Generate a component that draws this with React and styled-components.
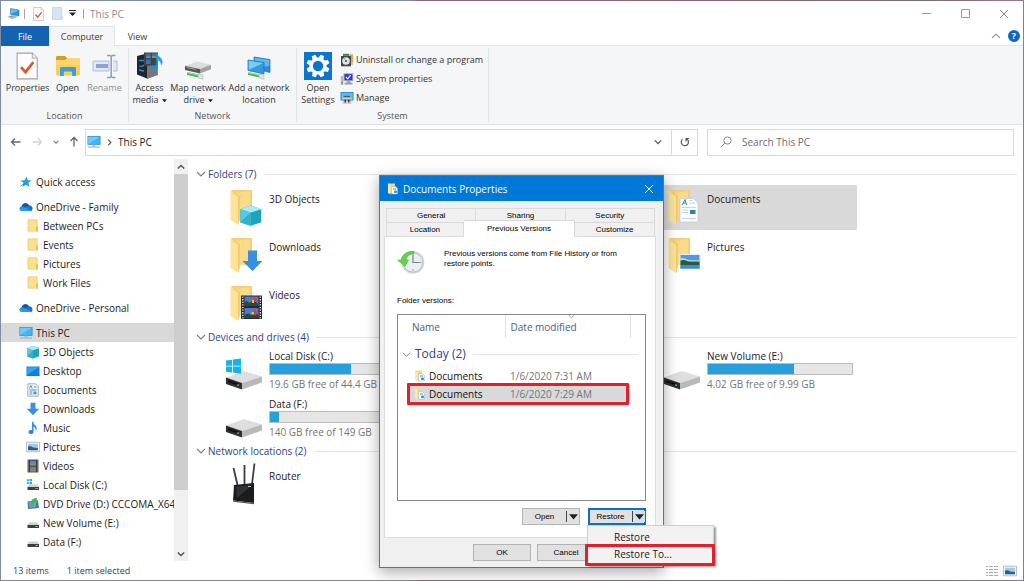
import React from 'react';
import styled, {createGlobalStyle, css} from 'styled-components';

const GlobalStyle = createGlobalStyle`
  * { box-sizing: border-box; }
  body {
    margin: 0;
    font-family: 'Open Sans', 'Noto Sans', sans-serif;
    font-size: 10px;
    line-height: 12px;
    color: #1b1b1b;
    overflow: hidden;
  }
  button, input {
    font: inherit;
    color: inherit;
    margin: 0;
    padding: 0;
    border: 0;
    border-radius: 0;
    background: none;
  }
  a { color: inherit; text-decoration: none; }
  h1, h2, p, ul { margin: 0; padding: 0; font: inherit; list-style: none; }
  svg { display: block; flex: none; }
`;

/* ---------- icons ---------- */

const PcIcon = ({size = 14}) => (
  <svg width={size} height={size} viewBox="0 0 14 14">
    <rect x="0.5" y="1" width="13" height="8.8" fill="#2f86c4" />
    <path d="M1.2 1.7h11.6v7.4H1.2z" fill="#41b4f4" />
    <path d="M1.2 9.1L12.8 1.7H1.2z" fill="#6fcbfa" />
    <path d="M5.5 9.8h3v1.4h-3z" fill="#a9bcc9" />
    <path d="M1 11.4h12v1.3H1z" fill="#a4b6c4" />
  </svg>
);

const TitlePcIcon = () => (
  <svg width="14" height="14" viewBox="0 0 14 14">
    <path d="M3.500 1.500l8.500 1.600v6L3.500 7.400z" fill="#2b95dd" stroke="#1a6fb0" strokeWidth="0.5" />
    <path d="M3.900 2l7.600 1.400L3.900 7z" fill="#67bff2" />
    <path d="M.5 9.500l6-1.500 4.400 2-6 2.200z" fill="#a7b8c4" />
    <path d="M2.400 9.800l3.800-.9" stroke="#6e8596" strokeWidth="0.7" />
  </svg>
);

const CheckPage = ({size = 14}) => (
  <svg width={size * 0.8} height={size} viewBox="0 0 20 25">
    <path d="M1 1h13.500L19 5.500V24H1z" fill="#fdfdfd" stroke="#a3a3a3" strokeWidth="1" />
    <path d="M14.500 1v4.500H19" fill="#eee" stroke="#a3a3a3" strokeWidth="0.8" />
    <path d="M4.500 13.500l4 4.500 7-9" fill="none" stroke="#da5a25" strokeWidth="2.4" />
  </svg>
);

const PageIcon = () => (
  <svg width="11" height="13" viewBox="0 0 11 13">
    <path d="M.5.5h9.300v12H.5z" fill="#d5e3f4" stroke="#c3d5ea" strokeWidth="0.8" />
    <path d="M9 8.500h1.500v4H9z" fill="#bed2ea" />
  </svg>
);

const OpenFolderIcon = () => (
  <svg width="26" height="28" viewBox="0 0 26 28">
    <path d="M1 5.500Q1 4 2.500 4H10l2 2h11.500Q25 6 25 7.500V22q0 1.500-1.500 1.500h-21Q1 23.500 1 22z" fill="#f9cf5b" />
    <path d="M1 5.500Q1 4 2.500 4H10l2 2-1.500 2H1z" fill="#dc9b1d" />
    <path d="M1 8h9.500l2-2H23.500Q25 6 25 7.500V13H1z" fill="#fcd670" />
    <path d="M5 24v-7.500q0-1.500 1.500-1.500h13q1.500 0 1.500 1.500V24h-3.800v-3.500q0-1-1-1h-6.400q-1 0-1 1V24z" fill="#3f9bdc" />
  </svg>
);

const RenameIcon = () => (
  <svg width="26" height="28" viewBox="0 0 26 28">
    <path d="M1 9h16v10H1zM21 9h4v10h-4" fill="#dfe8f6" stroke="#b0bfd8" strokeWidth="1" />
    <path d="M4 12h12v4H4z" fill="#8da3cb" />
    <path d="M15 3.500h3l1.200 1 1.200-1H23.500M15 25.500h3l1.200-1 1.200 1H23.500M19.200 4.500v20" fill="none" stroke="#8b9dbd" strokeWidth="1.500" />
  </svg>
);

const MediaIcon = () => (
  <svg width="28" height="28" viewBox="0 0 28 28">
    <path d="M8 2l13-1 1 22-11 4z" fill="#77777a" />
    <path d="M1 4l10-2.500v25L1 22.500z" fill="#20262c" />
    <path d="M8 0.500h14v13H8z" fill="#414448" />
    <path d="M10 1.500h4.500v4.500H10zM16 1.500h4.500v4.500H16zM10 7.500h4.500v4.500H10z" fill="#3f70c2" />
    <path d="M10 4.500h4.500V6H10zM16 4h4.500v2H16z" fill="#7d9a45" />
    <path d="M3 8.500h5M3 14q3 1 5-1M3 18l5 1" stroke="#1d93d6" strokeWidth="1.300" fill="none" />
    <path d="M21 1.500v14" stroke="#1c8fe4" strokeWidth="1.800" />
    <path d="M21 1c1 4 6 4.500 5.500 9.500-.2 1.500-1 2.500-1.800 3 .8-4-1.700-5-3.700-5.500z" fill="#2d9cec" />
    <ellipse cx="18.800" cy="16" rx="3.200" ry="2.500" fill="#1c8fe4" transform="rotate(-20 18.800 16)" />
  </svg>
);

const NetPipe = ({y = 0}) => (
  <g transform={`translate(0 ${y})`}>
    <path d="M3 0l14 3v3L3 3z" fill="#48b552" />
    <path d="M3 0l14 3v1L3 1.200z" fill="#9fe29c" />
    <path d="M14 2l5 .9v4.300l-5-1.300z" fill="#dfe6e2" stroke="#9fb0a7" strokeWidth="0.500" />
  </g>
);

const NetDriveIcon = () => (
  <svg width="28" height="28" viewBox="0 0 28 28">
    <path d="M1 14L13 9.500l14 3.200L16 17z" fill="#dcdcdc" />
    <path d="M1 14l15 3v4.500L1 18z" fill="#55595c" />
    <path d="M16 17l11-4.300v4.500L16 21.500z" fill="#a2a2a2" />
    <path d="M3 15.600l9 1.800" stroke="#9aa0a4" strokeWidth="1" />
    <NetPipe y={20} />
  </svg>
);

const NetLocationIcon = () => (
  <svg width="28" height="28" viewBox="0 0 28 28">
    <path d="M9 5l16 2.500v13L9 16.500z" fill="#2c8ed4" stroke="#1d6ba7" strokeWidth="0.700" />
    <path d="M9.700 5.800l14.600 2.300v6L9.700 15.700z" fill="#5db9ee" />
    <path d="M3 8l16 2.500v11.500L3 18.500z" fill="#3499df" stroke="#1d6ba7" strokeWidth="0.700" />
    <path d="M3.700 8.800l14.600 2.300L3.700 17.800z" fill="#7accf5" />
    <NetPipe y={20} />
  </svg>
);

const SettingsIcon = () => (
  <svg width="28" height="28" viewBox="0 0 28 28">
    <path d="M0 0h28v28H0z" fill="#0b74d1" />
    <g transform="translate(14 14)" fill="#fff">
      {[0, 45, 90, 135, 180, 225, 270, 315].map(a => (
        <path key={a} d="M-2.600-7.500L-1.900-11.500H1.900L2.600-7.500z" transform={`rotate(${a + 22})`} />
      ))}
      <circle r="8.600" />
      <circle r="5.200" fill="#0b74d1" />
    </g>
  </svg>
);

const UninstallIcon = () => (
  <svg width="14" height="14" viewBox="0 0 14 14">
    <path d="M3 1h10v11H3z" fill="#c9c3b3" />
    <path d="M3 .8h6v2H3z" fill="#4e7f42" />
    <path d="M10 2h3v7h-3z" fill="#e0a54e" />
    <path d="M1 3h10v10.300H1z" fill="#43464a" />
    <circle cx="6" cy="8" r="3.800" fill="#e4e6e6" />
    <path d="M6 8L3 5.500 5 4.300z" fill="#9dc5a6" />
    <circle cx="6" cy="8" r="1.100" fill="#565a5e" />
  </svg>
);

const SysPropsIcon = () => (
  <svg width="14" height="14" viewBox="0 0 14 14">
    <path d="M.8 4h2.500v9H.8z" fill="#b8b6ae" />
    <path d="M3.500 1.200h9.800v8H3.500z" fill="#a9aaca" />
    <path d="M4.500 2.200h7.800v6H4.500z" fill="#2d37c4" />
    <path d="M6 5l1.800 1.800L10.500 3.200" stroke="#fff" strokeWidth="1.200" fill="none" />
    <path d="M6.500 9.200h4v1.600h2v1.700h-8v-1.700h2z" fill="#9b9bb0" />
    <path d="M1.300 10h1.500v1.500H1.300z" fill="#5e9c52" />
  </svg>
);

const ManageIcon = () => (
  <svg width="14" height="14" viewBox="0 0 14 14">
    <path d="M.5 1h13v8.500H.5z" fill="#2686c6" />
    <path d="M1.300 1.800h11.400v6.800H1.300z" fill="#5abcf0" />
    <path d="M3.800 4.800h6.400v1.800H3.800z" fill="#4c5d69" />
    <path d="M2.500 6.500h9V13h-9z" fill="#cfd4d8" />
    <path d="M2.500 8.500h9v1.200h-9z" fill="#70818d" />
    <path d="M4.500 8.500H6v3H4.500zM8 8.500h1.500v3H8z" fill="#33424d" />
  </svg>
);

const StarIcon = () => (
  <svg width="12" height="12" viewBox="0 0 12 12">
    <path d="M6.500.5l1.300 3.700 4 .2-3.300 2.400 1 4.200L6 8.700 2.500 11l1.100-4L.3 4.600l4.200-.3z" fill="#2e9ae0" />
    <path d="M.5 10l4-2.500" stroke="#2276b5" strokeWidth="0.800" />
  </svg>
);

const CloudIcon = () => (
  <svg width="14" height="10" viewBox="0 0 14 10">
    <path d="M3 9Q.5 9 .5 6.600.5 4.500 2.700 4.200 3.600 1.200 6.600 1.200q2.200 0 3.300 2 3.600.3 3.600 3.200Q13.500 9 11 9z" fill="#1273c9" />
    <path d="M3 9Q.5 9 .5 6.600.5 4.500 3 4.200q1.200 0 2.200.8L12.600 8.400Q12 9 11 9z" fill="#2a9ae8" />
    <path d="M2.700 4.200Q3.600 1.200 6.600 1.200q2.200 0 3.300 2L5.500 5.200Q4.200 4 2.700 4.200z" fill="#0f56a8" />
  </svg>
);

const SmallFolderIcon = () => (
  <svg width="12" height="14" viewBox="0 0 12 14">
    <path d="M1 .8h9.200v11.400H1z" fill="#fae08c" stroke="#e3c263" strokeWidth="0.600" />
    <path d="M9 7.500h2v5.300L9.200 12z" fill="#e9bf54" />
  </svg>
);

const CubeShape = () => (
  <g>
    <path d="M7 .8l6 2.500v8L7 13.500l-6-2.200v-8z" fill="#1fa3bd" />
    <path d="M7 .8l6 2.500L7 5.300 1 3.300z" fill="#a9ecf5" />
    <path d="M1 3.300l6 2v8.200l-6-2.200z" fill="#55cbdd" />
    <path d="M1 11.300l6-6v8.200z" fill="#35b0c8" />
  </g>
);

const CubeIcon = () => <svg width="14" height="14" viewBox="0 0 14 14"><CubeShape /></svg>;

const DesktopIcon = () => (
  <svg width="14" height="12" viewBox="0 0 14 12">
    <path d="M.5 1.500h13v9H.5z" fill="#1482d6" />
    <path d="M1.200 2.200h11.600L1.200 9.500z" fill="#2fa9f5" />
    <path d="M.5 10.200h13v.9H.5z" fill="#175f9c" />
  </svg>
);

const DocIcon = () => (
  <svg width="12" height="14" viewBox="0 0 12 14">
    <path d="M.8.8h7.700L11.200 3.500v9.700H.8z" fill="#f4f8fb" stroke="#8b9aa5" strokeWidth="0.800" />
    <path d="M2.500 5.500L4 2.500l1.200 3M7 4h2.500M2.500 7h7M2.500 9h3M2.500 11h3" stroke="#3b87bd" strokeWidth="0.900" fill="none" />
    <path d="M6.500 8.500h3v2.800h-3z" fill="#4598cc" />
  </svg>
);

const DownIcon = () => (
  <svg width="14" height="14" viewBox="0 0 14 14">
    <path d="M4.500.8h5v6h3.800L7 13.200.7 6.800h3.800z" fill="#3a8fde" />
  </svg>
);

const MusicIcon = () => (
  <svg width="12" height="14" viewBox="0 0 12 14">
    <path d="M5.800.8v9.500" stroke="#1e87dc" strokeWidth="1.400" />
    <path d="M5.200.5C6 3.500 10 4 9.800 7.800c-.1 1-.5 1.700-1 2.200C9 7 7.500 6 5.800 5.500z" fill="#2b95e8" />
    <ellipse cx="4" cy="11" rx="2.600" ry="2" fill="#1e87dc" />
  </svg>
);

const PicIcon = () => (
  <svg width="14" height="12" viewBox="0 0 14 12">
    <path d="M.5 1.200h13v9.600H.5z" fill="#f7f9fa" stroke="#98a6b0" strokeWidth="0.700" />
    <path d="M2 2.700h10v6.600H2z" fill="#9cc9ee" />
    <path d="M2 5.500q3-1 5 1 3 .2 5 .8v2H2z" fill="#325f78" />
  </svg>
);

const FilmIcon = () => (
  <svg width="12" height="14" viewBox="0 0 12 14">
    <path d="M.6.6h10.800v12.800H.6z" fill="#2b2d31" />
    <path d="M3 1.500h6v5H3zM3 7.500h6v5H3z" fill="#5d7fc4" />
    <path d="M3 4.500h6v2H3zM3 10.500h6v2H3z" fill="#a98b3c" />
    <path d="M1.700 1.500v11.500M10.300 1.500v11.500" stroke="#dedede" strokeWidth="0.900" strokeDasharray="1 1" />
  </svg>
);

const SmallDriveIcon = ({windows}) => (
  <svg width="14" height="14" viewBox="0 0 14 14">
    {windows && <path d="M.8 1.300h2v2h-2zM3.500 1h2.500v2.300H3.500zM.8 4h2v2h-2zM3.500 4h2.500v2.300H3.500z" fill="#1fb4ec" />}
    <path d="M3 6.500h8.500l1.500 2.500H1.500z" fill="#cfcfcf" />
    <path d="M1.500 9h11.500v3H1.500z" fill="#3c3f42" />
    <path d="M9.500 10h2.200v.9H9.500z" fill="#9fd39b" />
  </svg>
);

const DvdIcon = () => (
  <svg width="14" height="14" viewBox="0 0 14 14">
    <path d="M1.500 4.500l10.500-1 1 7.500-11 1z" fill="#4e7896" />
    <path d="M2.500 5.500l8-1-1 6h-6z" fill="#69a2c3" />
    <path d="M10.500.5L5 3l2 1.200-3 5 6-4 1.500 1z" fill="#43b854" />
  </svg>
);

const TileFolder = ({children}) => (
  <svg width="40" height="40" viewBox="0 0 40 40">
    <path d="M8 2h20v25H8z" fill="#f3d073" />
    <path d="M12 5l14-2v26H12z" fill="#f8dc8b" />
    <path d="M6.500 2l9.300 5.500v23.500l-1.800 6L6.500 32z" fill="#fce399" />
    <path d="M6.500 2l9.300 5.500v23.500L14 37V9z" fill="#f1cb69" />
    {children}
  </svg>
);

const FolderCube = () => (
  <TileFolder>
    <g transform="translate(14.500 16) scale(1.750 1.620)"><CubeShape /></g>
  </TileFolder>
);

const FolderDown = () => (
  <TileFolder><path d="M24 14.500h9V25h5.500L28.500 35 18.500 25H24z" fill="#3790df" /></TileFolder>
);

const FolderFilm = () => (
  <TileFolder>
    <path d="M17 11.500h21V35H17z" fill="#26282c" />
    <path d="M20.500 12.500h14V22h-14zM20.500 24h14v10h-14z" fill="#5178cb" />
    <path d="M20.500 18q3-2 5 1l4-3 5 4v2h-14zM20.500 31q4-3 6 0l4-2 4 2v3h-14z" fill="#294b3c" />
    <path d="M30 14h2.500v4H30zM30 26h2.500v5H30z" fill="#d63e2c" />
    <path d="M28 16h2v3h-2zM27.500 28h2.500v2.500h-2.500z" fill="#edc02b" />
    <path d="M18.800 12.500V35M36.300 12.500V35" stroke="#e8e8e8" strokeWidth="1.400" strokeDasharray="1.300 1.300" />
  </TileFolder>
);

const FolderDoc = () => (
  <TileFolder>
    <path d="M18 10.500h13.500L36 15v19H18z" fill="#fbfdfe" stroke="#b9c5cd" strokeWidth="0.600" />
    <path d="M20 17l3-5.500 1.500 5.500M21 15h3" stroke="#2a86c9" strokeWidth="1" fill="none" />
    <path d="M27 12.500h3.500M27 15h6M20 19.500h14M20 22h6M20 24.500h6M20 30.500h14" stroke="#b8cddc" strokeWidth="0.800" />
    <path d="M28 22h5.500v4H28z" fill="#357fae" />
  </TileFolder>
);

const FolderPic = () => (
  <TileFolder>
    <path d="M17.500 18h21v15.500h-21z" fill="#eaf1f6" />
    <path d="M18.500 19h19v13.500h-19z" fill="#4f9be0" />
    <path d="M18.500 22q5 0 8 2 6 .5 11 0v5h-19z" fill="#b9dcf3" />
    <path d="M18.500 24.500q4-1.500 7 .8 6 .5 12 .2v3.500h-19z" fill="#2d5a46" />
    <path d="M18.500 29h19v3.500h-19z" fill="#3a8fc4" />
  </TileFolder>
);

const DriveIcon = ({windows}) => (
  <svg width="40" height="40" viewBox="0 -4 40 40">
    <path d="M2 22.500L20 16l18 5.500-20 6.500z" fill="#dededf" />
    <path d="M2 22.500L18 28v6.500L2 29z" fill="#2d2f31" />
    <path d="M18 28l20-6.500v6L18 34.500z" fill="#b9b9bb" />
    <path d="M4 25l11 3.800v2L4 27.200z" fill="#111" />
    <path d="M13 29.800l2 .6" stroke="#6fd08c" strokeWidth="1.200" />
    {windows && <path d="M2 5.500l6-.8v6H2zM8.800 4.600L17 3.500v7.200H8.800zM2 11.500h6v6l-6-.8zM8.800 11.500H17v7.300l-8.200-1.200z" fill="#12b4ef" />}
  </svg>
);

const RouterIcon = () => (
  <svg width="40" height="44" viewBox="0 0 40 44">
    <path d="M9.500 5l4 17M20.500 2v19M30.500 .5L28 21" stroke="#3b3d40" strokeWidth="1.800" />
    <path d="M10 22l20-2v20L9 37.500z" fill="#1b1c1e" />
    <path d="M12 23.500l16.500-1.500L13 35z" fill="#303235" />
    <path d="M9 37.500L30 40v1.200L9 38.800z" fill="#555" />
    <path d="M24 23.500h3" stroke="#ddd" strokeWidth="0.800" />
  </svg>
);

const HistoryIcon = () => (
  <svg width="28" height="28" viewBox="0 0 28 28">
    <circle cx="16" cy="13.500" r="11.300" fill="#cfd6dc" />
    <circle cx="16" cy="13.500" r="9.600" fill="#e9eff4" stroke="#b3bcc4" strokeWidth="0.800" />
    <path d="M16 5v2M16 20v2M22.500 13.500h2M8 13.500h2" stroke="#8c97a0" strokeWidth="0.900" />
    <path d="M16 6.500v7h6.500" stroke="#76828c" strokeWidth="1.200" fill="none" />
    <path d="M17 2.200Q6 2 4 11H.5L8 17.500l3.500-6.500H9Q10 5 17 4.700z" fill="#5fd248" stroke="#43ac35" strokeWidth="0.500" />
  </svg>
);

const TinyDocFolder = () => (
  <svg width="12" height="12" viewBox="0 0 12 12">
    <path d="M1 .5h7V10H1z" fill="#f6d67c" />
    <path d="M1 .5l2.500 1.500v9.500L1 10z" fill="#fdeaae" />
    <path d="M4.500 3.500h4l2 2V11h-6z" fill="#f5fafd" stroke="#9db7c9" strokeWidth="0.500" />
    <path d="M6 6h3M7.500 8h2v1.500h-2z" stroke="#3a8cc6" strokeWidth="0.900" fill="#3a8cc6" />
  </svg>
);

const Chevron = ({dir = 'down', size = 10, color = '#7d7d7d', weight = 1.100}) => {
  const turn = {down: 0, left: 90, up: 180, right: 270}[dir];
  return (
    <svg width={size} height={size} viewBox="0 0 10 10">
      <path d="M1 3l4 4 4-4" transform={`rotate(${turn} 5 5)`} fill="none" stroke={color} strokeWidth={weight} />
    </svg>
  );
};

const Arrow = ({dir, color = '#666'}) => (
  <svg width="12" height="12" viewBox="0 0 12 12">
    <path
      d="M10.500 6H1.500M5 2.500L1.500 6 5 9.500"
      transform={`rotate(${{left: 0, up: 90, right: 180}[dir]} 6 6)`}
      fill="none" stroke={color} strokeWidth="1.300"
    />
  </svg>
);

const Triangle = ({size = 5}) => (
  <svg width={size} height={size} viewBox="0 0 6 6"><path d="M0 1.500h6L3 5z" fill="#222" /></svg>
);

const CloseIcon = ({color = '#888', size = 10}) => (
  <svg width={size} height={size} viewBox="0 0 10 10">
    <path d="M1 1l8 8M9 1L1 9" stroke={color} strokeWidth="1" />
  </svg>
);

/* ---------- window ---------- */

const Desktop = styled.div`
  position: relative;
  height: 100vh;
  padding: 1px;
  background: linear-gradient(90deg, #7d8ba3 0 40%, #8d6672 41% 60%, #7b6a70 90%, #9a7780);
`;

const Window = styled.main`
  display: flex;
  flex-direction: column;
  height: 100%;
  background: #fff;
`;

const TitleBar = styled.header`
  display: flex;
  align-items: center;
  height: 25px;
  flex: none;
  padding: 0 10px 0 6px;
  color: #8e8e8e;
`;

const QuickBar = styled.div`
  display: flex;
  align-items: center;
  flex: 1;
`;

const QuickButton = styled.button`
  display: grid;
  place-items: center;
  width: ${props => props.$width || 18}px;
  height: 18px;
`;

const Divider = styled.span`
  width: 1px;
  height: 10px;
  margin: 0 ${props => props.$after || 0}px 0 ${props => props.$before || 0}px;
  background: #a5a5a5;
`;

const WindowButtons = styled.div`
  display: flex;
  gap: 21px;
`;

const TabStrip = styled.div`
  display: flex;
  align-items: stretch;
  height: 20px;
  flex: none;
  padding-right: 3px;
  border-bottom: 1px solid #e3e4e5;
  font-size: 9px;
`;

const RibbonTab = styled.button`
  min-width: ${props => props.$width}px;
  margin-bottom: -1px;
  border: 1px solid transparent;
  border-bottom: 0;
  color: #3b3b3b;
  ${props => props.$kind === 'file' && css`
    background: #1462b0;
    color: #fff;
  `}
  ${props => props.$kind === 'active' && css`
    background: #f5f6f7;
    border-color: #e3e4e5;
  `}
`;

const TabTools = styled.div`
  display: flex;
  align-items: center;
  gap: 7px;
  margin-left: auto;
`;

const HelpButton = styled.button`
  width: 12px;
  height: 12px;
  border-radius: 50%;
  background: #0f68bf;
  color: #fff;
  font-weight: 700;
  line-height: 12px;
`;

const Ribbon = styled.section`
  display: flex;
  flex: none;
  height: 79px;
  padding: 2px 0;
  background: #f5f6f7;
  border-bottom: 1px solid #dfe0e1;
  font-size: 9px;
`;

const RibbonGroup = styled.div`
  display: flex;
  flex-direction: column;
  justify-content: space-between;
  width: ${props => props.$width}px;
  padding: 4px ${props => props.$side || 0}px 0;
  border-right: 1px solid #e1e2e3;
  color: #555;
  text-align: center;
`;

const RibbonRow = styled.div`
  display: flex;
  align-items: flex-start;
`;

const BigButton = styled.button`
  display: flex;
  flex-direction: column;
  align-items: center;
  gap: 2px;
  width: ${props => props.$width}px;
  white-space: nowrap;
  color: ${props => props.$off ? '#8f8f8f' : '#333'};
`;

const Line = styled.span`
  display: flex;
  align-items: center;
  justify-content: ${props => props.$center ? 'center' : 'flex-start'};
  gap: 3px;
`;

const SmallButtons = styled.div`
  display: flex;
  flex-direction: column;
  gap: 5px;
  padding: 1px 0 0 1px;
`;

const SmallButton = styled.button`
  display: flex;
  align-items: center;
  gap: 2px;
  height: 14px;
  white-space: nowrap;
  color: #333;
`;

const AddressRow = styled.div`
  display: flex;
  align-items: center;
  flex: none;
  height: 34px;
  padding: 0 9px;
`;

const NavButtons = styled.div`
  display: flex;
  align-items: center;
  justify-content: space-between;
  width: 70px;
  margin-right: 5px;
`;

const Field = styled.div`
  display: flex;
  align-items: center;
  height: 27px;
  border: 1px solid #d9d9d9;
  background: #fff;
`;

const PathField = styled(Field)`
  flex: 1;
  padding-left: 1px;
  gap: 5px;
`;

const PathInput = styled.input`
  flex: 1;
  min-width: 0;
  outline: 0;
`;

const FieldButton = styled.button`
  display: grid;
  place-items: center;
  width: 26px;
  height: 25px;
  margin-left: -5px;
  border-left: ${props => props.$ruled ? '1px solid #d9d9d9' : '0'};
`;

const SearchField = styled(Field)`
  flex: none;
  width: 307px;
  gap: 10px;
  margin-left: 9px;
  padding-left: 12px;
`;

const SearchInput = styled(PathInput)`
  &::placeholder { color: #6d6d6d; opacity: 1; }
`;

const Content = styled.div`
  display: flex;
  flex: 1;
  min-height: 0;
`;

/* ---------- sidebar ---------- */

const Sidebar = styled.nav`
  display: flex;
  width: 187px;
  flex: none;
`;

const Tree = styled.div`
  display: flex;
  flex-direction: column;
  gap: 6px;
  width: 173px;
  padding-top: 13px;
  overflow: hidden;
`;

const TreeLink = styled.a`
  display: flex;
  align-items: center;
  gap: 3px;
  height: 19px;
  padding-left: ${props => props.$root ? 18 : 25}px;
  white-space: nowrap;
  background: ${props => props.$selected ? '#d9d9d9' : 'none'};
`;

const TreeIcon = styled.span`
  display: grid;
  place-items: center;
  width: 14px;
  flex: none;
`;

const ScrollBar = styled.div`
  display: flex;
  flex-direction: column;
  width: 14px;
  background: #f0f0f0;
`;

const ScrollButton = styled.button`
  display: grid;
  place-items: center;
  height: 15px;
`;

const ScrollTrack = styled.div`
  flex: 1;
`;

const ScrollThumb = styled.div`
  height: 85%;
  background: #cdcdcd;
`;

/* ---------- files ---------- */

const Files = styled.section`
  flex: 1;
  padding: 7px 6px 0 8px;
`;

const SectionTitle = styled.h2`
  display: flex;
  align-items: center;
  gap: 2px;
  height: 16px;
  color: #2f3f7f;
  white-space: nowrap;
  &::after {
    content: '';
    flex: 1;
    height: 1px;
    margin-left: 5px;
    background: #e4e4e4;
  }
`;

const Tiles = styled.div`
  display: grid;
  grid-template-columns: repeat(auto-fill, 215px);
  gap: 3px 4px;
  padding: 3px 0 ${props => props.$end || 0}px 8px;
`;

const Tile = styled.a`
  display: flex;
  grid-column: ${props => props.$column || 1};
  height: 45px;
  gap: 5px;
  padding-left: 20px;
  background: ${props => props.$selected ? '#d9d9d9' : 'none'};
  align-items: center;
`;

const TileText = styled.div`
  display: flex;
  flex-direction: column;
  align-self: flex-start;
  width: 146px;
  padding-top: ${props => props.$drive ? 2 : 8}px;
  gap: 1px;
  white-space: nowrap;
`;

const Meter = styled.div`
  height: 12px;
  background: #e6e6e6;
  border: 1px solid #bcbcbc;
`;

const MeterFill = styled.div`
  height: 100%;
  background: #26a0da;
`;

const Muted = styled.span`
  padding-top: 2px;
  color: #747474;
`;

const StatusBar = styled.footer`
  display: flex;
  align-items: center;
  gap: 18px;
  height: 19px;
  flex: none;
  padding: 0 6px 0 12px;
  color: #2c3f63;
  font-size: 9px;
`;

const ViewButtons = styled.div`
  display: flex;
  gap: 5px;
  margin-left: auto;
`;

/* ---------- properties dialog ---------- */

const Dialog = styled.section`
  position: absolute;
  left: 379px;
  top: 175px;
  width: 285px;
  height: 393px;
  display: flex;
  flex-direction: column;
  background: #f0f0f0;
  border: 1px solid #2b83c6;
  box-shadow: 0 4px 14px rgba(0, 0, 0, 0.35);
  font-family: 'Liberation Sans', Arial, sans-serif;
  font-size: 8px;
  line-height: 10px;
  color: #000;
`;

const DialogTitle = styled.header`
  display: flex;
  align-items: center;
  gap: 4px;
  height: 25px;
  flex: none;
  padding: 0 9px 0 7px;
  background: #0078d7;
  color: #fff;
  font-family: 'Open Sans', 'Noto Sans', sans-serif;
  font-size: 10px;
`;

const DialogName = styled.h1`
  flex: 1;
`;

const DialogTabs = styled.div`
  display: flex;
  flex: none;
  padding: 0 8px 0 6px;
  margin-top: ${props => props.$first ? 7 : 0}px;
`;

const DialogTab = styled.button`
  flex: ${props => props.$grow || 1};
  height: 14px;
  border: 1px solid #dadada;
  border-bottom: 0;
  & + & { border-left: 0; }
  ${props => props.$active && css`
    height: 17px;
    margin: -2px 0 -1px;
    padding-bottom: 1px;
    background: #fff;
    z-index: 1;
  `}
`;

const Panel = styled.div`
  display: flex;
  flex-direction: column;
  height: 302px;
  margin: 0 7px 0 4px;
  padding: 12px 9px 0 12px;
  background: #fff;
  border: 1px solid #dcdcdc;
`;

const Intro = styled.div`
  display: flex;
  gap: 19px;
  height: 47px;
`;

const VersionList = styled.div`
  height: 187px;
  margin-top: 8px;
  border: 1px solid #828790;
  font-family: 'Open Sans', 'Noto Sans', sans-serif;
  font-size: 10px;
`;

const VersionTable = styled.table`
  width: 100%;
  border-collapse: collapse;
  table-layout: fixed;
  th, td {
    padding: 0;
    text-align: left;
    font-weight: 400;
    white-space: nowrap;
  }
`;

const HeadCell = styled.th`
  position: relative;
  height: 23px;
  color: #4c607a;
  border-right: 1px solid #e3e3e3;
  && { padding-left: ${props => props.$pad}px; }
`;

const SortMark = styled.span`
  position: absolute;
  top: -2px;
  left: 50%;
`;

const GroupCell = styled.td`
  height: 29px;
  && { padding-top: 3px; }
`;

const GroupLabel = styled.div`
  display: flex;
  align-items: center;
  gap: 4px;
  padding: 0 7px 0 4px;
  color: #2f3f7f;
  font-size: 12px;
  &::after {
    content: '';
    flex: 1;
    height: 1px;
    margin-left: 3px;
    background: #e4e4e4;
  }
`;

const VersionCell = styled.td`
  position: relative;
  height: 18px;
  color: ${props => props.$muted ? '#747474' : '#111'};
  background: ${props => props.$selected ? '#d9d9d9' : 'none'};
  && { padding-left: ${props => props.$pad || 0}px; }
`;

const Marker = styled.div`
  position: absolute;
  z-index: 1;
  border: 3px solid #e21f2b;
  border-radius: 1px;
  pointer-events: none;
`;

const RowMarker = styled(Marker)`
  top: -2px;
  left: -2px;
  width: 222px;
  height: 22px;
`;

const ButtonRow = styled.div`
  display: flex;
  justify-content: flex-end;
  gap: ${props => props.$gap}px;
  margin-top: 7px;
`;

const DialogButton = styled.button`
  width: 58px;
  height: 17px;
  background: #e1e1e1;
  border: 1px solid #b3b3b3;
`;

const SplitButton = styled.div`
  display: flex;
  width: 58px;
  height: 17px;
  background: #e1e1e1;
  border: 1px solid ${props => props.$active ? '#0f6fc0' : '#b3b3b3'};
  box-shadow: ${props => props.$active ? 'inset 0 0 0 1px #0f6fc0' : 'none'};
`;

const SplitMain = styled.button`
  flex: 1;
`;

const SplitArrow = styled.button`
  display: grid;
  place-items: center;
  width: 13px;
  margin: 2px 0;
  border-left: 1px solid #444;
  background: ${props => props.$active ? '#cce4f7' : 'none'};
`;

const DialogFooter = styled.footer`
  display: flex;
  gap: 6px;
  padding: 6px 0 0 93px;
`;

const Menu = styled.div`
  position: absolute;
  left: 587px;
  top: 525px;
  width: 127px;
  display: flex;
  flex-direction: column;
  padding: 2px 0;
  background: #f2f2f2;
  border: 1px solid #cfcfcf;
  box-shadow: 2px 2px 2px rgba(0, 0, 0, 0.4);
`;

const MenuItem = styled.button`
  height: 17px;
  padding-left: 26px;
  text-align: left;
`;

const MenuMarker = styled(Marker)`
  left: -3px;
  right: -2px;
  top: 18px;
  height: 22px;
`;

const tree = [
  [{name: 'Quick access', icon: <StarIcon />}],
  [
    {name: 'OneDrive - Family', icon: <CloudIcon />},
    {name: 'Between PCs', icon: <SmallFolderIcon />},
    {name: 'Events', icon: <SmallFolderIcon />},
    {name: 'Pictures', icon: <SmallFolderIcon />},
    {name: 'Work Files', icon: <SmallFolderIcon />},
  ],
  [{name: 'OneDrive - Personal', icon: <CloudIcon />}],
  [
    {name: 'This PC', icon: <PcIcon />, selected: true},
    {name: '3D Objects', icon: <CubeIcon />},
    {name: 'Desktop', icon: <DesktopIcon />},
    {name: 'Documents', icon: <DocIcon />},
    {name: 'Downloads', icon: <DownIcon />},
    {name: 'Music', icon: <MusicIcon />},
    {name: 'Pictures', icon: <PicIcon />},
    {name: 'Videos', icon: <FilmIcon />},
    {name: 'Local Disk (C:)', icon: <SmallDriveIcon windows />},
    {name: 'DVD Drive (D:) CCCOMA_X64', icon: <DvdIcon />},
    {name: 'New Volume (E:)', icon: <SmallDriveIcon />},
    {name: 'Data (F:)', icon: <SmallDriveIcon />},
  ],
];

const folders = [
  {name: '3D Objects', icon: <FolderCube />},
  {name: 'Documents', icon: <FolderDoc />, column: 3, selected: true},
  {name: 'Downloads', icon: <FolderDown />},
  {name: 'Pictures', icon: <FolderPic />, column: 3},
  {name: 'Videos', icon: <FolderFilm />},
];

const drives = [
  {name: 'Local Disk (C:)', free: '19.6 GB free of 44.4 GB', used: 56, windows: true},
  {name: 'New Volume (E:)', free: '4.02 GB free of 9.99 GB', used: 60, column: 3},
  {name: 'Data (F:)', free: '140 GB free of 149 GB', used: 6},
];

const versions = [
  {name: 'Documents', date: '1/6/2020 7:31 AM'},
  {name: 'Documents', date: '1/6/2020 7:29 AM', selected: true},
];

const TopBar = () => (
  <>
    <TitleBar>
      <QuickBar>
        <TitlePcIcon />
        <Divider $before={3} $after={5} />
        <QuickButton aria-label="Properties"><CheckPage size={14} /></QuickButton>
        <QuickButton aria-label="New folder"><PageIcon /></QuickButton>
        <QuickButton $width={12} aria-label="Customize">
          <svg width="7" height="7" viewBox="0 0 7 7"><path d="M0 0h7v1H0zM0 2.500h7L3.500 6z" fill="#222" /></svg>
        </QuickButton>
        <Divider $before={5} $after={6} />
        <span>This PC</span>
      </QuickBar>
      <WindowButtons>
        <QuickButton aria-label="Minimize">
          <svg width="9" height="9"><path d="M0 4.500h9" stroke="#999" /></svg>
        </QuickButton>
        <QuickButton aria-label="Maximize">
          <svg width="9" height="9"><path d="M.5.5h8v8h-8z" fill="none" stroke="#999" /></svg>
        </QuickButton>
        <QuickButton aria-label="Close"><CloseIcon /></QuickButton>
      </WindowButtons>
    </TitleBar>
    <TabStrip>
      <RibbonTab $kind="file" $width={48}>File</RibbonTab>
      <RibbonTab $kind="active" $width={66}>Computer</RibbonTab>
      <RibbonTab $width={45}>View</RibbonTab>
      <TabTools>
        <button aria-label="Collapse ribbon"><Chevron dir="up" color="#9b9b9b" /></button>
        <HelpButton aria-label="Help">?</HelpButton>
      </TabTools>
    </TabStrip>
  </>
);

const RibbonBar = () => (
  <Ribbon>
    <RibbonGroup $width={128} $side={5}>
      <RibbonRow>
        <BigButton $width={43}><CheckPage size={28} /><span>Properties</span></BigButton>
        <BigButton $width={37}><OpenFolderIcon /><span>Open</span></BigButton>
        <BigButton $width={37} $off><RenameIcon /><span>Rename</span></BigButton>
      </RibbonRow>
      <span>Location</span>
    </RibbonGroup>
    <RibbonGroup $width={168} $side={2}>
      <RibbonRow>
        <BigButton $width={37}>
          <MediaIcon />
          <div>Access<Line $center>media<Triangle /></Line></div>
        </BigButton>
        <BigButton $width={60}>
          <NetDriveIcon />
          <div>Map network<Line $center>drive<Triangle /></Line></div>
        </BigButton>
        <BigButton $width={62}><NetLocationIcon /><span>Add a network<br />location</span></BigButton>
      </RibbonRow>
      <span>Network</span>
    </RibbonGroup>
    <RibbonGroup $width={192}>
      <RibbonRow>
        <BigButton $width={42}><SettingsIcon /><span>Open<br />Settings</span></BigButton>
        <SmallButtons>
          <SmallButton><UninstallIcon />Uninstall or change a program</SmallButton>
          <SmallButton><SysPropsIcon />System properties</SmallButton>
          <SmallButton><ManageIcon />Manage</SmallButton>
        </SmallButtons>
      </RibbonRow>
      <span>System</span>
    </RibbonGroup>
  </Ribbon>
);

const AddressBar = () => (
  <AddressRow>
    <NavButtons>
      <button aria-label="Back"><Arrow dir="left" /></button>
      <button aria-label="Forward"><Arrow dir="right" color="#d2d2d2" /></button>
      <button aria-label="Recent"><Chevron size={6} weight={1.800} /></button>
      <button aria-label="Up"><Arrow dir="up" /></button>
    </NavButtons>
    <PathField>
      <PcIcon />
      <Chevron dir="right" size={7} color="#555" weight={1.600} />
      <PathInput aria-label="Address" defaultValue="This PC" />
      <FieldButton aria-label="Previous locations"><Chevron size={8} color="#555" weight={1.600} /></FieldButton>
      <FieldButton $ruled aria-label="Refresh">
        <svg width="10" height="10" viewBox="0 0 10 10">
          <path d="M2.500 2.300A3.600 3.600 0 1 0 6.800 2M6 4.500V1.500h3" fill="none" stroke="#555" strokeWidth="1.200" />
        </svg>
      </FieldButton>
    </PathField>
    <SearchField>
      <svg width="12" height="12" viewBox="0 0 12 12">
        <path d="M.8 11.200l4-4" stroke="#888" strokeWidth="1" />
        <circle cx="7.500" cy="4.500" r="3.600" fill="none" stroke="#888" strokeWidth="1" />
      </svg>
      <SearchInput aria-label="Search This PC" placeholder="Search This PC" />
    </SearchField>
  </AddressRow>
);

const SideTree = () => (
  <Sidebar>
    <Tree>
      {tree.map((group, g) => (
        <div key={g}>
          {group.map((item, i) => (
            <TreeLink key={item.name} href="#" $root={i === 0} $selected={item.selected}>
              <TreeIcon>{item.icon}</TreeIcon>{item.name}
            </TreeLink>
          ))}
        </div>
      ))}
    </Tree>
    <ScrollBar>
      <ScrollButton aria-label="Scroll up"><Chevron dir="up" size={8} color="#555" weight={1.800} /></ScrollButton>
      <ScrollTrack><ScrollThumb /></ScrollTrack>
      <ScrollButton aria-label="Scroll down"><Chevron size={8} color="#555" weight={1.800} /></ScrollButton>
    </ScrollBar>
  </Sidebar>
);

const FileArea = () => (
  <Files>
    <SectionTitle><Chevron />Folders (7)</SectionTitle>
    <Tiles $end={3}>
      {folders.map(f => (
        <Tile key={f.name} href="#" $column={f.column} $selected={f.selected}>
          {f.icon}<TileText>{f.name}</TileText>
        </Tile>
      ))}
    </Tiles>
    <SectionTitle><Chevron />Devices and drives (4)</SectionTitle>
    <Tiles $end={2}>
      {drives.map(d => (
        <Tile key={d.name} href="#" $column={d.column}>
          <DriveIcon windows={d.windows} />
          <TileText $drive>
            {d.name}
            <Meter><MeterFill style={{width: `${d.used}%`}} /></Meter>
            <Muted>{d.free}</Muted>
          </TileText>
        </Tile>
      ))}
    </Tiles>
    <SectionTitle><Chevron />Network locations (2)</SectionTitle>
    <Tiles>
      <Tile href="#"><RouterIcon /><TileText>Router</TileText></Tile>
    </Tiles>
  </Files>
);

const PropertiesDialog = () => (
  <Dialog role="dialog" aria-label="Documents Properties">
    <DialogTitle>
      <TinyDocFolder />
      <DialogName>Documents Properties</DialogName>
      <button aria-label="Close dialog"><CloseIcon color="#fff" /></button>
    </DialogTitle>
    <DialogTabs $first>
      <DialogTab>General</DialogTab>
      <DialogTab>Sharing</DialogTab>
      <DialogTab>Security</DialogTab>
    </DialogTabs>
    <DialogTabs>
      <DialogTab $grow={77}>Location</DialogTab>
      <DialogTab $grow={112} $active>Previous Versions</DialogTab>
      <DialogTab $grow={80}>Customize</DialogTab>
    </DialogTabs>
    <Panel>
      <Intro>
        <HistoryIcon />
        <p>Previous versions come from File History or from<br />restore points.</p>
      </Intro>
      <p>Folder versions:</p>
      <VersionList>
        <VersionTable>
          <colgroup>
            <col width="11" /><col width="96" /><col width="125" /><col />
          </colgroup>
          <thead>
            <tr>
              <HeadCell colSpan={2} $pad={14}>Name</HeadCell>
              <HeadCell $pad={5}>Date modified<SortMark><Chevron size={7} /></SortMark></HeadCell>
              <td />
            </tr>
          </thead>
          <tbody>
            <tr>
              <GroupCell colSpan={4}><GroupLabel><Chevron size={9} />Today (2)</GroupLabel></GroupCell>
            </tr>
            {versions.map(v => (
              <tr key={v.date}>
                <td />
                <VersionCell $selected={v.selected} $pad={5}>
                  <Line><TinyDocFolder />{v.name}</Line>
                  {v.selected && <RowMarker />}
                </VersionCell>
                <VersionCell $selected={v.selected} $muted $pad={5}>{v.date}</VersionCell>
                <td />
              </tr>
            ))}
          </tbody>
        </VersionTable>
      </VersionList>
      <ButtonRow $gap={8}>
        <SplitButton>
          <SplitMain>Open</SplitMain>
          <SplitArrow aria-label="Open options"><Triangle size={9} /></SplitArrow>
        </SplitButton>
        <SplitButton $active>
          <SplitMain>Restore</SplitMain>
          <SplitArrow $active aria-label="Restore options"><Triangle size={9} /></SplitArrow>
        </SplitButton>
      </ButtonRow>
    </Panel>
    <DialogFooter>
      <DialogButton>OK</DialogButton>
      <DialogButton>Cancel</DialogButton>
    </DialogFooter>
  </Dialog>
);

export default function App() {
  return (
    <Desktop>
      <GlobalStyle />
      <Window>
        <TopBar />
        <RibbonBar />
        <AddressBar />
        <Content>
          <SideTree />
          <FileArea />
        </Content>
        <StatusBar>
          <span>13 items</span>
          <span>1 item selected</span>
          <ViewButtons>
            <button aria-label="Details view">
              <svg width="12" height="12" viewBox="0 0 12 12">
                <path d="M0 1.500h2M0 4.500h2M0 7.500h2M0 10.500h2M3 1.500h4M3 4.500h4M3 7.500h4M3 10.500h4M8 1.500h4M8 4.500h4M8 7.500h4M8 10.500h4" stroke="#aaa" />
              </svg>
            </button>
            <button aria-label="Large icons view"><PicIcon /></button>
          </ViewButtons>
        </StatusBar>
      </Window>
      <PropertiesDialog />
      <Menu role="menu">
        <MenuItem role="menuitem">Restore</MenuItem>
        <MenuItem role="menuitem">Restore To...</MenuItem>
        <MenuMarker />
      </Menu>
    </Desktop>
  );
}
